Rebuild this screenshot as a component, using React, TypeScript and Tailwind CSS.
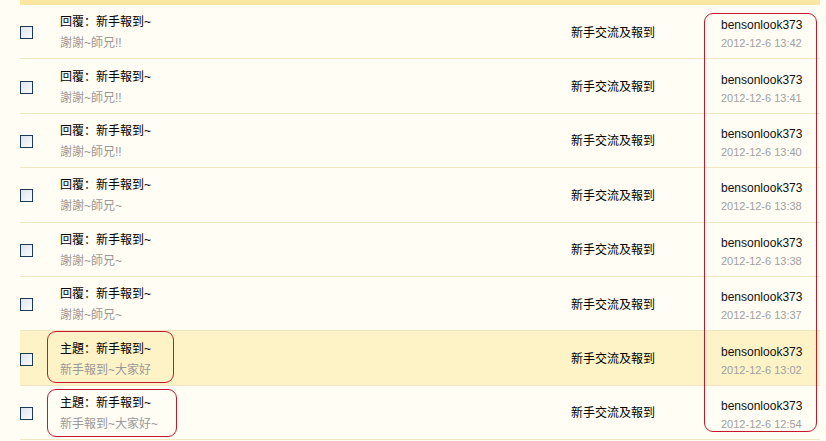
import React from "react";

type Row = {
  title: string;
  summary: string;
  time: string;
  highlight?: boolean;
  marked?: boolean;
};

const rows: Row[] = [
  { title: "回覆：新手報到~", summary: "謝謝~師兄!!", time: "2012-12-6 13:42" },
  { title: "回覆：新手報到~", summary: "謝謝~師兄!!", time: "2012-12-6 13:41" },
  { title: "回覆：新手報到~", summary: "謝謝~師兄!!", time: "2012-12-6 13:40" },
  { title: "回覆：新手報到~", summary: "謝謝~師兄~", time: "2012-12-6 13:38" },
  { title: "回覆：新手報到~", summary: "謝謝~師兄~", time: "2012-12-6 13:38" },
  { title: "回覆：新手報到~", summary: "謝謝~師兄~", time: "2012-12-6 13:37" },
  { title: "主題：新手報到~", summary: "新手報到~大家好", time: "2012-12-6 13:02", highlight: true, marked: true },
  { title: "主題：新手報到~", summary: "新手報到~大家好~", time: "2012-12-6 12:54", marked: true },
];

const font = { fontFamily: '"Liberation Sans", "Noto Sans CJK SC", sans-serif' };

const Checkbox = () => (
  <div className="w-[13px] h-[13px] border border-[#1d3a57] bg-gradient-to-br from-[#dde4ec] to-[#fbfcfd]" />
);

const PostRow = ({ row }: { row: Row }) => {
  return (
    <div
      className={`h-[54.4px] flex items-center border-b border-[#f3e7c2] ${
        row.highlight ? "bg-[#fdf3c6]" : ""
      }`}
    >
      {/* Checkbox */}
      <div className="w-[40px] flex items-center mt-[2px]">
        <Checkbox />
      </div>

      {/* Title + summary */}
      <div className="relative flex-1 flex flex-col gap-[7px] mt-[2px]">
        <p className="text-[12px] leading-[14px] text-black">{row.title}</p>
        <p className="text-[12px] leading-[14px] text-[#9a9a9a]">{row.summary}</p>
        {row.marked && (
          <div
            className={`absolute -left-[13px] ${
              row.highlight ? "top-[-11px] w-[127px] h-[52px]" : "top-[-7px] w-[130px] h-[48px]"
            } border border-[#c4182c] rounded-[9px]`}
          />
        )}
      </div>

      {/* Forum */}
      <div className="w-[150px] text-[12px] text-black mt-[2px]">新手交流及報到</div>

      {/* Author */}
      <div className="w-[99px] flex flex-col gap-[5px] mt-[5px]">
        <p className="text-[12px] leading-[14px] text-[#111]">bensonlook373</p>
        <p className="text-[11px] leading-[13px] text-[#a0a0a0]">{row.time}</p>
      </div>
    </div>
  );
};

export default function App() {
  return (
    <div className="w-[826px] h-[441px] overflow-hidden bg-[#fffdf4]" style={font}>
      <div className="relative ml-[20px] w-[800px]">
        {/* Header strip */}
        <div className="h-[5px] bg-[#fce6a2]" />

        {rows.map((row, i) => (
          <PostRow key={i} row={row} />
        ))}

        {/* Author column marker */}
        <div className="absolute left-[684px] top-[13px] w-[113px] h-[419px] border border-[#c4182c] rounded-[9px] pointer-events-none" />
      </div>
    </div>
  );
}
